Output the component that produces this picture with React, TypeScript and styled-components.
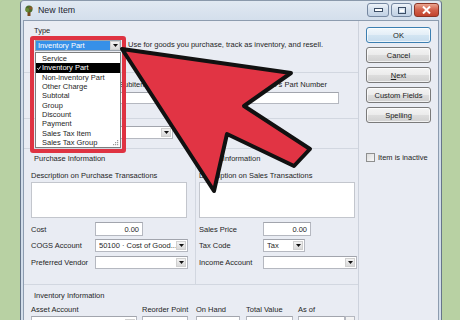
import React from "react";
import styled, { createGlobalStyle } from "styled-components";

const GlobalStyle = createGlobalStyle`
	html,
	body {
		margin: 0;
		padding: 0;
	}
	body {
		width: 460px;
		height: 320px;
		overflow: hidden;
		background: #b8d1a3;
		font-family: "Liberation Sans", Arial, sans-serif;
		font-size: 7.5px;
		color: #1f1f1f;
	}
`;

const Page = styled.div`
	position: relative;
	width: 460px;
	height: 320px;
	overflow: hidden;
	padding-left: 20px;
	box-sizing: border-box;
`;

const Window = styled.div`
	width: 422px;
	height: 340px;
	box-sizing: border-box;
	border: 1px solid #66758a;
	border-top-color: #8a99ab;
	border-radius: 4px 4px 0 0;
	background: linear-gradient(#e1e9f2, #d0dcea 24px, #d3deeb);
	padding: 0 2px;
	display: flex;
	flex-direction: column;
`;

const TitleBar = styled.div`
	height: 19px;
	display: flex;
	align-items: flex-start;
`;

const TitleIcon = styled.svg`
	margin: 4px 0 0 1px;
	width: 10px;
	height: 11px;
`;

const Title = styled.div`
	margin-left: 4px;
	line-height: 19px;
	font-size: 8.8px;
	color: #1b2430;
`;

const Controls = styled.div`
	margin-left: auto;
	padding-top: 2px;
	display: flex;
	gap: 2px;
`;

const CtlButton = styled.div<{ $w: number; $close?: boolean }>`
	width: ${p => p.$w}px;
	height: 14px;
	box-sizing: border-box;
	border: 1px solid ${p => (p.$close ? "#8a3526" : "#7587a0")};
	border-radius: 3px;
	background: ${p =>
		p.$close
			? "linear-gradient(#eba58f, #d2604a 50%, #c2432d)"
			: "linear-gradient(#eef3f9, #d2deec 50%, #c1d1e4)"};
	display: flex;
	align-items: center;
	justify-content: center;
`;

const Client = styled.div`
	flex: 1;
	display: flex;
	border: 1px solid #8d9caf;
	background: #e9ecf3;
	overflow: hidden;
`;

const Main = styled.div`
	width: 335px;
	box-sizing: border-box;
	border-right: 1px solid #cdd2dc;
	display: flex;
	flex-direction: column;
`;

const Section = styled.div<{ $h: number; $top?: number; $left?: number; $line?: boolean }>`
	height: ${p => p.$h}px;
	flex-shrink: 0;
	box-sizing: border-box;
	padding: ${p => p.$top ?? 0}px 0 0 ${p => p.$left ?? 0}px;
	border-top: ${p => (p.$line ? "1px solid #d2d7e0" : "none")};
`;

const Label = styled.div<{ $indent?: number; $w?: number }>`
	height: 9px;
	line-height: 9px;
	white-space: nowrap;
	margin-left: ${p => p.$indent ?? 0}px;
	width: ${p => (p.$w ? `${p.$w}px` : "auto")};
	flex-shrink: 0;
`;

const TypeRow = styled.div`
	margin-top: 5px;
	display: flex;
	align-items: flex-start;
`;

const TypeCombo = styled.div`
	position: relative;
	width: 86px;
	height: 11px;
	display: flex;
	box-sizing: border-box;
	border: 1px solid #9aa3ad;
	background: #fff;
`;

const TypeValue = styled.div`
	flex: 1;
	background: #3690e8;
	color: #fff;
	line-height: 9px;
	padding-left: 2px;
	white-space: nowrap;
`;

const Highlight = styled.div`
	position: absolute;
	left: -6px;
	top: -5px;
	width: 96px;
	height: 117px;
	box-sizing: border-box;
	border: 4px solid #df3342;
	border-radius: 3px;
	z-index: 3;
	pointer-events: none;
`;

const TypeList = styled.div`
	position: absolute;
	left: -1px;
	top: 11px;
	width: 86px;
	height: 96px;
	box-sizing: border-box;
	border: 1px solid #7d7d7d;
	background: #fff;
	padding-top: 1px;
	z-index: 2;
`;

const ListItem = styled.div<{ $selected?: boolean }>`
	height: 9.35px;
	line-height: 9.35px;
	display: flex;
	align-items: center;
	padding-left: 1px;
	white-space: nowrap;
	background: ${p => (p.$selected ? "#000" : "transparent")};
	color: ${p => (p.$selected ? "#fff" : "#1f1f1f")};
`;

const CheckSlot = styled.span`
	width: 5px;
	display: inline-flex;
	align-items: center;
`;

const Grip = styled.svg`
	position: absolute;
	right: 1px;
	bottom: 1px;
	width: 6px;
	height: 6px;
`;

const TypeHint = styled.div`
	margin-left: 7px;
	line-height: 9px;
	white-space: nowrap;
`;

const FieldGrid = styled.div<{ $cols: string }>`
	display: grid;
	grid-template-columns: ${p => p.$cols};
`;

const FieldCol = styled.div`
	display: flex;
	flex-direction: column;
	gap: 3px;
`;

const Box = styled.div<{ $w: number; $h?: number; $right?: boolean }>`
	width: ${p => p.$w}px;
	height: ${p => p.$h ?? 13}px;
	flex-shrink: 0;
	box-sizing: border-box;
	background: #fff;
	border: 1px solid #b5b8c0;
	border-top-color: #a2a5ad;
	display: flex;
	align-items: center;
	justify-content: ${p => (p.$right ? "flex-end" : "flex-start")};
	padding: 0 3px;
	white-space: nowrap;
	overflow: hidden;
`;

const ComboBox = styled(Box)`
	padding-right: 1px;
`;

const ComboText = styled.span`
	flex: 1;
	overflow: hidden;
`;

const DropButton = styled.div`
	width: 10px;
	height: 9px;
	flex-shrink: 0;
	background: linear-gradient(#f3f3f3, #d9d9d9);
	border: 1px solid #d0d0d0;
	box-sizing: border-box;
	display: flex;
	align-items: center;
	justify-content: center;
`;

const InfoGrid = styled.div`
	height: 136px;
	flex-shrink: 0;
	display: grid;
	grid-template-columns: 172px 1fr;
	border-top: 1px solid #d2d7e0;
	box-sizing: border-box;
`;

const InfoCol = styled.div<{ $left: number; $divider?: boolean }>`
	padding: 5px 0 0 ${p => p.$left}px;
	border-right: ${p => (p.$divider ? "1px solid #d2d7e0" : "none")};
	display: flex;
	flex-direction: column;
`;

const Memo = styled.div`
	margin-top: 2px;
	width: 156px;
	height: 36px;
	box-sizing: border-box;
	background: #fff;
	border: 1px solid #c3c6cd;
`;

const FormRow = styled.div<{ $gap: number }>`
	margin-top: ${p => p.$gap}px;
	display: flex;
	align-items: center;
`;

const InvGrid = styled.div`
	margin-top: 5px;
	display: grid;
	grid-template-columns: 111px 54px 50px 52px 60px;
	row-gap: 2px;
`;

const CalButton = styled.div`
	width: 10px;
	height: 14px;
	box-sizing: border-box;
	border: 1px solid #b5b8c0;
	background: linear-gradient(#f5f5f5, #dedede);
	display: flex;
	align-items: center;
	justify-content: center;
`;

const DateRow = styled.div`
	display: flex;
`;

const Side = styled.div`
	flex: 1;
	padding: 6px 0 0 7px;
	display: flex;
	flex-direction: column;
	gap: 4px;
`;

const Button = styled.div<{ $default?: boolean }>`
	width: 65px;
	height: 16px;
	box-sizing: border-box;
	border: 1px solid ${p => (p.$default ? "#3c7fb1" : "#7a7a7a")};
	border-radius: 3px;
	background: ${p =>
		p.$default
			? "linear-gradient(#f2f8fc, #e3eef7 50%, #d3e5f2 51%, #c6dcee)"
			: "linear-gradient(#f4f4f4, #ebebeb 50%, #dddddd 51%, #d0d0d0)"};
	box-shadow: inset 0 0 0 1px rgba(255, 255, 255, 0.7);
	display: flex;
	align-items: center;
	justify-content: center;
	color: #1a1a1a;
`;

const CheckRow = styled.label`
	margin-top: 26px;
	display: flex;
	align-items: center;
	gap: 3px;
`;

const CheckBox = styled.span`
	width: 9px;
	height: 9px;
	box-sizing: border-box;
	border: 1px solid #8e8f8f;
	background: linear-gradient(135deg, #dcdcdc, #f8f8f8);
`;

const ArrowLayer = styled.svg`
	position: absolute;
	left: 0;
	top: 0;
	width: 460px;
	height: 320px;
	z-index: 5;
	pointer-events: none;
`;

const Caret = () => (
	<svg width="5" height="3" viewBox="0 0 5 3">
		<path d="M0 0h5L2.5 3z" fill="#111" />
	</svg>
);

const Combo = ({ w, text = "", h = 13 }: { w: number; text?: string; h?: number }) => (
	<ComboBox $w={w} $h={h}>
		<ComboText>{text}</ComboText>
		<DropButton>
			<Caret />
		</DropButton>
	</ComboBox>
);

const itemTypes = [
	"Service",
	"Inventory Part",
	"Non-inventory Part",
	"Other Charge",
	"Subtotal",
	"Group",
	"Discount",
	"Payment",
	"Sales Tax Item",
	"Sales Tax Group",
];

export default function App() {
	return (
		<>
			<GlobalStyle />
			<Page>
				<Window>
					<TitleBar>
						<TitleIcon viewBox="0 0 10 11">
							<rect x="3.5" y="7" width="3" height="4" fill="#7a4a1e" />
							<circle cx="5" cy="4" r="3.6" fill="#4d6b2a" />
							<circle cx="3.3" cy="5" r="2" fill="#6a8a34" />
							<circle cx="6.8" cy="3" r="1.6" fill="#8a5a2a" />
						</TitleIcon>
						<Title>New Item</Title>
						<Controls>
							<CtlButton $w={22}>
								<svg width="9" height="4" viewBox="0 0 9 4">
									<rect x="0.5" y="0.5" width="8" height="3" fill="#fff" stroke="#3c4e66" />
								</svg>
							</CtlButton>
							<CtlButton $w={21}>
								<svg width="8" height="7" viewBox="0 0 8 7">
									<rect x="0.5" y="0.5" width="7" height="6" fill="none" stroke="#3c4e66" />
									<rect x="2" y="2.5" width="4" height="2.5" fill="#fff" />
								</svg>
							</CtlButton>
							<CtlButton $w={25} $close>
								<svg width="9" height="8" viewBox="0 0 9 8">
									<path d="M1 0.5l7 7M8 0.5l-7 7" stroke="#fff" strokeWidth="2" />
								</svg>
							</CtlButton>
						</Controls>
					</TitleBar>
					<Client>
						<Main>
							<Section $h={51} $top={5} $left={11}>
								<Label $indent={-1}>Type</Label>
								<TypeRow>
									<TypeCombo>
										<TypeValue>Inventory Part</TypeValue>
										<DropButton>
											<Caret />
										</DropButton>
										<Highlight />
										<TypeList>
											{itemTypes.map(t => (
												<ListItem key={t} $selected={t === "Inventory Part"}>
													<CheckSlot>
														{t === "Inventory Part" && (
															<svg width="4" height="4" viewBox="0 0 4 4">
																<path d="M0.3 2.2l1.2 1.3L3.7 0.4" stroke="#fff" strokeWidth="0.9" fill="none" />
															</svg>
														)}
													</CheckSlot>
													{t}
												</ListItem>
											))}
											<Grip viewBox="0 0 6 6">
												<rect x="4" y="0" width="1.2" height="1.2" fill="#9a9a9a" />
												<rect x="2" y="2" width="1.2" height="1.2" fill="#9a9a9a" />
												<rect x="4" y="2" width="1.2" height="1.2" fill="#9a9a9a" />
												<rect x="0" y="4" width="1.2" height="1.2" fill="#9a9a9a" />
												<rect x="2" y="4" width="1.2" height="1.2" fill="#9a9a9a" />
												<rect x="4" y="4" width="1.2" height="1.2" fill="#9a9a9a" />
											</Grip>
										</TypeList>
									</TypeCombo>
									<TypeHint>Use for goods you purchase, track as inventory, and resell.</TypeHint>
								</TypeRow>
							</Section>

							<Section $h={46} $top={7} $left={11} $line>
								<FieldGrid $cols="84px 124px 96px">
									<FieldCol>
										<Label>Item Name/Number</Label>
										<Box $w={78} $h={12} />
									</FieldCol>
									<FieldCol>
										<Label>Subitem of</Label>
										<Combo w={118} h={12} />
									</FieldCol>
									<FieldCol>
										<Label $indent={-10}>Manufacturer's Part Number</Label>
										<Box $w={96} $h={12} />
									</FieldCol>
								</FieldGrid>
							</Section>

							<Section $h={30} $top={7} $left={11} $line>
								<Combo w={138} />
							</Section>

							<InfoGrid>
								<InfoCol $left={7} $divider>
									<Label $indent={3}>Purchase Information</Label>
									<Label style={{ marginTop: 8 }}>Description on Purchase Transactions</Label>
									<Memo />
									<FormRow $gap={4}>
										<Label $w={64}>Cost</Label>
										<Box $w={48} $h={14} $right>
											0.00
										</Box>
									</FormRow>
									<FormRow $gap={3}>
										<Label $w={64}>COGS Account</Label>
										<Combo w={93} text="50100 · Cost of Good..." />
									</FormRow>
									<FormRow $gap={4}>
										<Label $w={64}>Preferred Vendor</Label>
										<Combo w={93} />
									</FormRow>
								</InfoCol>
								<InfoCol $left={3}>
									<Label $indent={3}>Sales Information</Label>
									<Label style={{ marginTop: 8 }}>Description on Sales Transactions</Label>
									<Memo />
									<FormRow $gap={4}>
										<Label $w={64}>Sales Price</Label>
										<Box $w={48} $h={14} $right>
											0.00
										</Box>
									</FormRow>
									<FormRow $gap={3}>
										<Label $w={64}>Tax Code</Label>
										<Combo w={42} text="Tax" />
									</FormRow>
									<FormRow $gap={4}>
										<Label $w={64}>Income Account</Label>
										<Combo w={94} />
									</FormRow>
								</InfoCol>
							</InfoGrid>

							<Section $h={60} $top={6} $left={7} $line>
								<Label $indent={3}>Inventory Information</Label>
								<InvGrid>
									<Label>Asset Account</Label>
									<Label>Reorder Point</Label>
									<Label>On Hand</Label>
									<Label>Total Value</Label>
									<Label>As of</Label>
									<Combo w={106} h={14} />
									<Box $w={46} $h={14} />
									<Box $w={44} $h={14} $right>
										0.00
									</Box>
									<Box $w={47} $h={14} $right>
										0.00
									</Box>
									<DateRow>
										<Box $w={47} $h={14}>
											12/15/2013
										</Box>
										<CalButton>
											<svg width="6" height="6" viewBox="0 0 6 6">
												<rect x="0.5" y="0.5" width="5" height="5" fill="#c9c6f0" stroke="#3b38a8" />
												<rect x="0.5" y="0.5" width="5" height="1.5" fill="#3b38a8" />
											</svg>
										</CalButton>
									</DateRow>
								</InvGrid>
							</Section>
						</Main>
						<Side>
							<Button $default>OK</Button>
							<Button>Cancel</Button>
							<Button>
								<u>N</u>ext
							</Button>
							<Button>Custom Fields</Button>
							<Button>Spelling</Button>
							<CheckRow>
								<CheckBox />
								Item is inactive
							</CheckRow>
						</Side>
					</Client>
				</Window>
				<ArrowLayer viewBox="0 0 460 320">
					<polygon
						points="122,49 291,73 244,106 310,149 294,166 227,134 214,191"
						fill="#e13444"
						stroke="#111"
						strokeWidth="4"
						strokeLinejoin="round"
					/>
				</ArrowLayer>
			</Page>
		</>
	);
}
